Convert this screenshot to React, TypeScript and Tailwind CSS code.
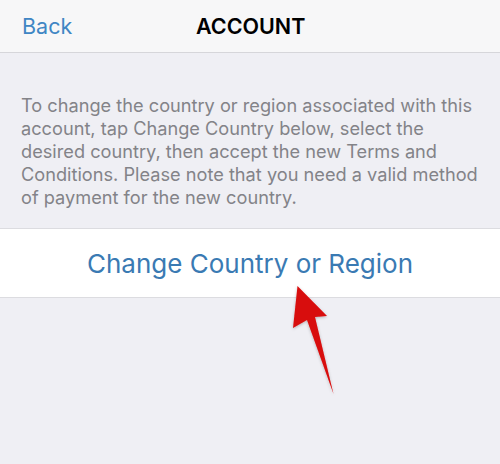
export default function App() {
  return (
    <div className="relative flex h-[464px] w-[500px] flex-col overflow-hidden bg-[#efeff4] font-['Inter','Noto_Sans',sans-serif]">
      <header className="flex h-[53px] shrink-0 items-center border-b border-[#d6d6da] bg-[#f7f7f8] pl-[22px]">
        <span className="w-[100px] text-[21.5px] text-[#3f86c4]">Back</span>
        <h1 className="ml-[74px] text-[21.5px] font-semibold text-black">ACCOUNT</h1>
      </header>
      <p className="mt-[41px] px-[21px] text-[18.2px] leading-[23px] text-[#838388]">
        To change the country or region associated with this
        <br />
        account, tap Change Country below, select the
        <br />
        desired country, then accept the new Terms and
        <br />
        Conditions. Please note that you need a valid method
        <br />
        of payment for the new country.
      </p>
      <div className="mt-[19px] flex h-[70px] items-center justify-center border-y border-[#dcdce0] bg-white">
        <span className="text-[26px] text-[#3a7ab3]">Change Country or Region</span>
      </div>
      <svg className="absolute left-0 top-0" width="500" height="464" viewBox="0 0 500 464">
        <defs>
          <filter id="sh" x="-50%" y="-50%" width="200%" height="200%">
            <feDropShadow dx="0" dy="1" stdDeviation="1.5" floodColor="#000" floodOpacity="0.25" />
          </filter>
        </defs>
        <path
          d="M297.5 286 L327 316 L315 317 L333.5 394 L307 320 L293 328 Z"
          fill="#d80a0a"
          filter="url(#sh)"
        />
      </svg>
    </div>
  );
}
